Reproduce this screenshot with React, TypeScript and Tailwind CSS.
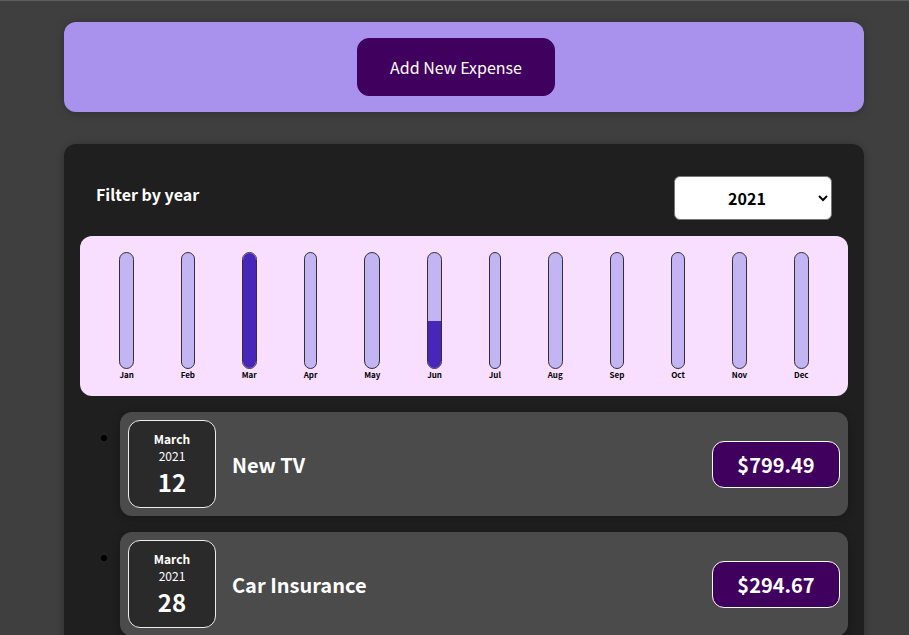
import { useState } from 'react';

type Expense = {
  id: string;
  title: string;
  amount: number;
  month: string;
  year: string;
  day: string;
};

const EXPENSES: Expense[] = [
  { id: 'e1', title: 'New TV', amount: 799.49, month: 'March', year: '2021', day: '12' },
  { id: 'e2', title: 'Car Insurance', amount: 294.67, month: 'March', year: '2021', day: '28' },
];

const CHART = [
  { label: 'Jan', fill: 0 },
  { label: 'Feb', fill: 0 },
  { label: 'Mar', fill: 100 },
  { label: 'Apr', fill: 0 },
  { label: 'May', fill: 0 },
  { label: 'Jun', fill: 41 },
  { label: 'Jul', fill: 0 },
  { label: 'Aug', fill: 0 },
  { label: 'Sep', fill: 0 },
  { label: 'Oct', fill: 0 },
  { label: 'Nov', fill: 0 },
  { label: 'Dec', fill: 0 },
];

function NewExpense() {
  return (
    <section className="flex justify-center rounded-xl bg-[#a892ee] p-4 pr-8 shadow-[0_1px_8px_rgba(0,0,0,0.25)]">
      <button
        type="button"
        className="cursor-pointer rounded-xl border border-[#40005d] bg-[#40005d] px-8 py-4 text-base leading-6 text-white"
      >
        Add New Expense
      </button>
    </section>
  );
}

function ExpensesFilter({ year, onChange }: { year: string; onChange: (year: string) => void }) {
  return (
    <div className="flex items-center justify-between px-4">
      <label htmlFor="year" className="pb-2 text-base leading-6 font-bold text-white">
        Filter by year
      </label>
      <select
        id="year"
        value={year}
        onChange={(event) => onChange(event.target.value)}
        className="h-11 w-[158px] rounded-md border border-[#767676] bg-white text-center text-base font-bold text-black"
      >
        <option value="2022">2022</option>
        <option value="2021">2021</option>
        <option value="2020">2020</option>
        <option value="2019">2019</option>
      </select>
    </div>
  );
}

function ChartBar({ label, fill }: { label: string; fill: number }) {
  return (
    <div className="flex h-full flex-col items-center">
      <div className="flex w-full flex-1 flex-col justify-end overflow-hidden rounded-xl border border-[#313131] bg-[#c3b4f3]">
        <div className="bg-[#4826b9]" style={{ height: `${fill}%` }} />
      </div>
      <div className="text-center text-[8px] leading-[11px] font-bold text-black">{label}</div>
    </div>
  );
}

function Chart() {
  return (
    <div className="mt-4 flex h-40 justify-around rounded-xl bg-[#f8dfff] p-4">
      {CHART.map((point) => (
        <ChartBar key={point.label} label={point.label} fill={point.fill} />
      ))}
    </div>
  );
}

function ExpenseItem({ expense }: { expense: Expense }) {
  return (
    <li>
      <div className="flex items-center justify-between rounded-xl bg-[#4b4b4b] p-2 shadow-[0_2px_8px_rgba(0,0,0,0.25)]">
        <time className="flex size-22 shrink-0 flex-col items-center justify-center rounded-xl border border-[#ececec] bg-[#2a2a2a] pt-0.5 text-white">
          <span className="text-xs leading-[18px] font-bold">{expense.month}</span>
          <span className="text-xs leading-4">{expense.year}</span>
          <span className="text-2xl leading-9 font-bold">{expense.day}</span>
        </time>
        <h2 className="mx-4 flex-1 pt-0.5 text-xl font-bold text-white">{expense.title}</h2>
        <div className="min-w-32 rounded-xl border border-white bg-[#40005d] px-6 py-2 text-center text-xl leading-[29px] font-bold text-white">
          ${expense.amount}
        </div>
      </div>
    </li>
  );
}

export default function App() {
  const [year, setYear] = useState('2021');

  return (
    <main className="h-screen overflow-hidden border-t border-[#5c5f5e] bg-[#3f3f3f] pt-[21px] pr-[45px] pl-16 font-['Noto_Sans_CJK_JP',sans-serif]">
      <NewExpense />
      <section className="mt-8 rounded-xl bg-[#1f1f1f] px-4 pt-8 pb-4 shadow-[0_1px_8px_rgba(0,0,0,0.25)]">
        <ExpensesFilter year={year} onChange={setYear} />
        <Chart />
        <ul className="mt-4 list-disc space-y-4 pl-10 text-black">
          {EXPENSES.map((expense) => (
            <ExpenseItem key={expense.id} expense={expense} />
          ))}
        </ul>
      </section>
    </main>
  );
}
